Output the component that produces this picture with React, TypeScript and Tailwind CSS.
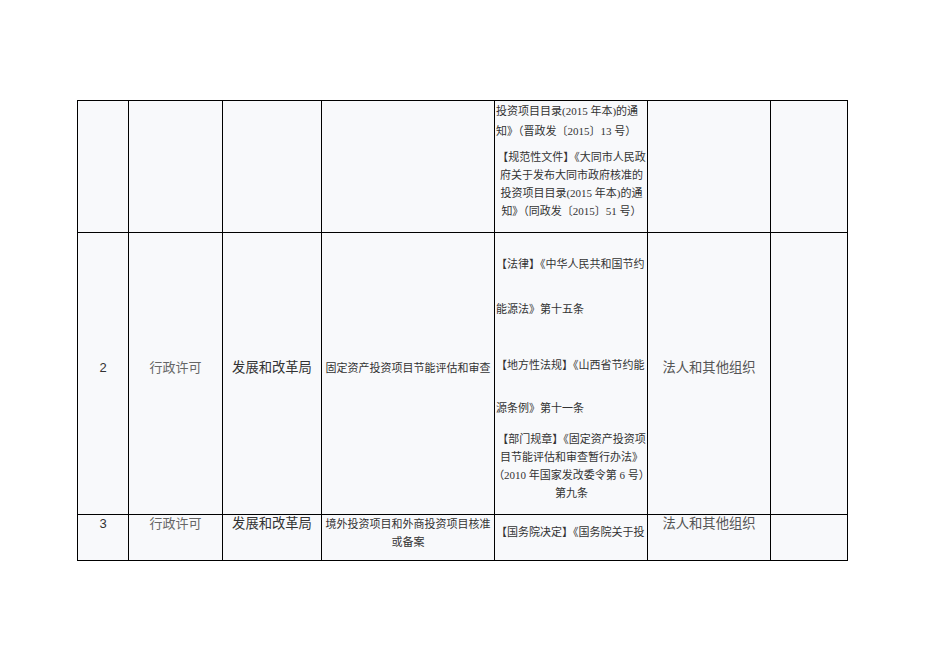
const CJK = "font-['Liberation_Serif','Noto_Sans_CJK_SC',serif]";
const SANS = "font-['Liberation_Sans','Noto_Sans_CJK_SC',sans-serif]";

const cell = "border-l border-t border-black bg-[#f8f9fb] overflow-visible";

function Line({ children, h, center }: { children: React.ReactNode; h: number; center?: boolean }) {
  return (
    <div
      className={`whitespace-nowrap text-[11px] text-[#333] ${center ? "text-center" : "text-left"} flex items-center ${center ? "justify-center" : "justify-start"}`}
      style={{ height: h }}
    >
      {children}
    </div>
  );
}

export default function App() {
  return (
    <div className="min-h-[662px] w-[936px] bg-white pl-[77px] pt-[100px]">
      <div className={`grid w-[771px] grid-cols-[51px_94px_99px_173px_153px_123px_77px] grid-rows-[132px_282px_46px] border-b border-r border-black ${CJK}`}>
        {/* Row 1 (continued from previous page) */}
        <div className={cell} />
        <div className={cell} />
        <div className={cell} />
        <div className={cell} />
        <div className={`${cell} pl-px`}>
          <Line h={20}>投资项目目录(2015 年本)的通</Line>
          <Line h={20}>知》（晋政发〔2015〕13 号）</Line>
          <div className="mt-[7px]">
            <Line h={18} center>【规范性文件】《大同市人民政</Line>
            <Line h={18} center>府关于发布大同市政府核准的</Line>
            <Line h={18} center>投资项目目录(2015 年本)的通</Line>
            <Line h={18} center>知》（同政发〔2015〕51 号）</Line>
          </div>
        </div>
        <div className={cell} />
        <div className={cell} />

        {/* Row 2 */}
        <div className={`${cell} pt-[126px] text-center text-[13px] leading-[18px] text-[#333] ${SANS}`}>2</div>
        <div className={`${cell} pt-[126px] text-center text-[13px] leading-[18px] text-[#666]`}>行政许可</div>
        <div className={`${cell} pt-[126px] text-center text-[13.3px] leading-[18px] text-[#333]`}>发展和改革局</div>
        <div className={`${cell} pt-[126px] whitespace-nowrap text-center text-[11px] leading-[18px] text-[#333]`}>
          固定资产投资项目节能评估和审查
        </div>
        <div className={`${cell} pl-px pt-[9px]`}>
          <Line h={45}>【法律】《中华人民共和国节约</Line>
          <Line h={45}>能源法》第十五条</Line>
          <div className="mt-[12px]">
            <Line h={43}>【地方性法规】《山西省节约能</Line>
            <Line h={43}>源条例》第十一条</Line>
          </div>
          <Line h={18} center>【部门规章】《固定资产投资项</Line>
          <Line h={18} center>目节能评估和审查暂行办法》</Line>
          <Line h={18} center>（2010 年国家发改委令第 6 号）</Line>
          <Line h={18} center>第九条</Line>
        </div>
        <div className={`${cell} pt-[126px] text-center text-[13.3px] leading-[18px] text-[#555]`}>法人和其他组织</div>
        <div className={cell} />

        {/* Row 3 */}
        <div className={`${cell} text-center text-[13px] leading-[18px] text-[#333] ${SANS}`}>3</div>
        <div className={`${cell} text-center text-[13px] leading-[18px] text-[#666]`}>行政许可</div>
        <div className={`${cell} text-center text-[13.3px] leading-[18px] text-[#333]`}>发展和改革局</div>
        <div className={`${cell} text-center text-[11px] leading-[18px] text-[#333]`}>
          <div className="whitespace-nowrap">境外投资项目和外商投资项目核准</div>
          <div>或备案</div>
        </div>
        <div className={`${cell} pl-px pt-[8px]`}>
          <Line h={18}>【国务院决定】《国务院关于投</Line>
        </div>
        <div className={`${cell} text-center text-[13.3px] leading-[18px] text-[#555]`}>法人和其他组织</div>
        <div className={cell} />
      </div>
    </div>
  );
}
